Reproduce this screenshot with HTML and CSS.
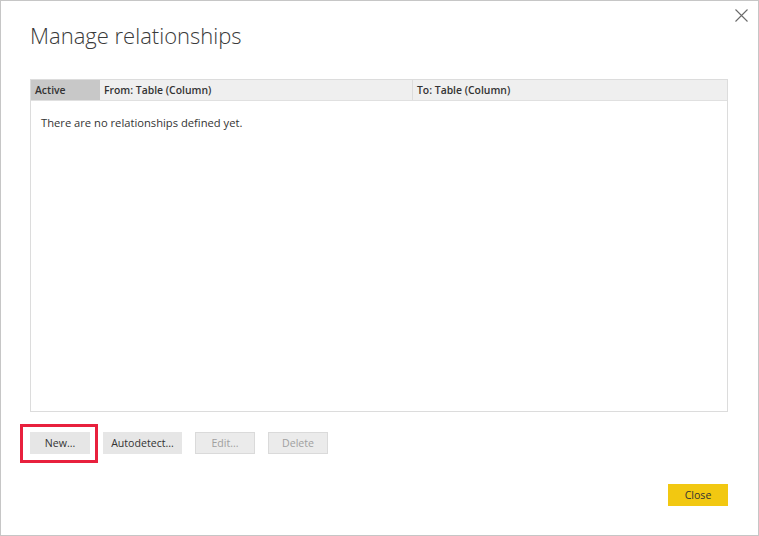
FILE: index.html
```html
<!DOCTYPE html>
<html>
<head>
<meta charset="utf-8">
<link rel="stylesheet" href="styles.css">
</head>
<body>
<div class="dialog">
  <button class="close-x" aria-label="Close">
    <svg width="13" height="13" viewBox="0 0 13 13"><path d="M0.5 0.5 L12.5 12.5 M12.5 0.5 L0.5 12.5" stroke="#6a6a6a" stroke-width="1.1" fill="none"/></svg>
  </button>
  <h1 class="title">Manage relationships</h1>
  <div class="grid">
    <div class="grid-head">
      <div class="col col-active">Active</div>
      <div class="col col-from">From: Table (Column)</div>
      <div class="col col-to">To: Table (Column)</div>
    </div>
    <div class="grid-body">
      <p class="empty">There are no relationships defined yet.</p>
    </div>
  </div>
  <div class="actions">
    <div class="highlight"><button class="btn">New...</button></div>
    <button class="btn wide">Autodetect...</button>
    <button class="btn disabled">Edit...</button>
    <button class="btn disabled">Delete</button>
  </div>
  <div class="footer">
    <button class="btn primary">Close</button>
  </div>
</div>
</body>
</html>
```

FILE: styles.css
```css
*, *::before, *::after { box-sizing: border-box; }
html, body { margin: 0; padding: 0; background: #fff; }
body { width: 759px; height: 536px; overflow: hidden; }
.dialog {
  position: relative;
  width: 759px;
  height: 536px;
  border: 1px solid #c6c6c6;
  background: #fff;
  padding: 0 30px 0 29px;
  font-family: "Open Sans", "Segoe UI", sans-serif;
  color: #333;
}
.close-x {
  position: absolute;
  top: 8px;
  right: 10px;
  width: 13px;
  height: 13px;
  padding: 0;
  border: 0;
  background: transparent;
  display: block;
}
.close-x svg { display: block; }
.title {
  margin: 18px 0 0 0;
  font-weight: 300;
  font-size: 22px;
  line-height: 32px;
  color: #3a3a3a;
}
.grid {
  margin-top: 28px;
  width: 698px;
  height: 333px;
  border: 1px solid #dcdcdc;
  display: flex;
  flex-direction: column;
}
.grid-head {
  display: flex;
  height: 21px;
  background: #efefef;
  border-bottom: 1px solid #e0e0e0;
  font-size: 10.4px;
  font-weight: 600;
  color: #333;
}
.col {
  display: flex;
  align-items: center;
  padding-left: 4px;
}
.col-active { width: 69px; background: #c8c8c8; }
.col-from { width: 313px; border-right: 1px solid #dcdcdc; }
.col-to { flex: 1; }
.grid-body { flex: 1; }
.empty {
  margin: 14px 0 0 10px;
  font-size: 11.2px;
  line-height: 16px;
  color: #333;
}
.actions {
  display: flex;
  align-items: center;
  gap: 13px;
  margin-top: 20px;
  height: 22px;
}
.highlight {
  position: relative;
  display: flex;
}
.highlight::before {
  content: "";
  position: absolute;
  left: -10px;
  top: -8px;
  width: 78px;
  height: 39px;
  border: 3px solid #e8203d;
}
.btn {
  display: flex;
  align-items: center;
  justify-content: center;
  height: 22px;
  width: 60px;
  padding: 0;
  border: 1px solid #e6e6e6;
  background: #e6e6e6;
  font-family: "Open Sans", "Segoe UI", sans-serif;
  font-size: 10.6px;
  color: #333;
  margin: 0;
}
.btn.wide { width: 79px; }
.btn.disabled {
  background: #ebebeb;
  border-color: #dadada;
  color: #a0a0a0;
}
.footer {
  display: flex;
  justify-content: flex-end;
  margin-top: 30px;
}
.btn.primary {
  background: #f2c811;
  border-color: #f2c811;
  color: #333;
}
```
